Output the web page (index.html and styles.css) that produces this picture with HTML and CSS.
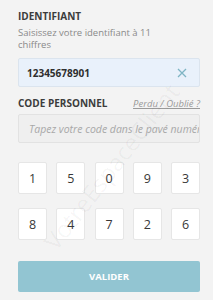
FILE: index.html
```html
<!DOCTYPE html>
<html lang="fr">
<head>
<meta charset="utf-8">
<link rel="stylesheet" href="styles.css">
</head>
<body>
<div class="page">
  <div class="label">IDENTIFIANT</div>
  <div class="hint">Saisissez votre identifiant à 11 chiffres</div>
  <div class="field field-id">
    <span class="value">12345678901</span>
    <svg class="clear" width="10" height="10" viewBox="0 0 10 10"><path d="M1 1 L9 9 M9 1 L1 9" stroke="#7fb5c4" stroke-width="1.3" fill="none"/></svg>
  </div>
  <div class="label-row">
    <span class="label">CODE PERSONNEL</span>
    <span class="link">Perdu / Oublié ?</span>
  </div>
  <div class="field field-code">
    <span class="placeholder">Tapez votre code dans le pavé numérique</span>
  </div>
  <div class="keypad">
    <div class="key">1</div><div class="key">5</div><div class="key">0</div><div class="key">9</div><div class="key">3</div>
    <div class="key">8</div><div class="key">4</div><div class="key">7</div><div class="key">2</div><div class="key">6</div>
  </div>
  <div class="button">VALIDER</div>
  <div class="watermark">VotreEspaceClient</div>
</div>
</body>
</html>
```
FILE: styles.css
```css
html, body {
  margin: 0;
  padding: 0;
  background: #f3f3f3;
}
.page {
  position: relative;
  width: 213px;
  height: 300px;
  overflow: hidden;
  box-sizing: border-box;
  padding: 10px 13px 0 18px;
  font-family: "Open Sans", sans-serif;
  color: #444;
}
.label {
  font-size: 10px;
  font-weight: 700;
  line-height: 13px;
  color: #3c3c3c;
}
.hint {
  margin-top: 4px;
  font-size: 9.5px;
  line-height: 11.5px;
  color: #8a8a8a;
  width: 140px;
}
.field {
  box-sizing: border-box;
  height: 29px;
  border-radius: 2px;
  display: flex;
  align-items: center;
  padding: 0 10px;
  overflow: hidden;
  white-space: nowrap;
}
.field-id {
  margin-top: 8px;
  background: #e9f1fb;
  border: 1px solid #dbe4ee;
  justify-content: space-between;
  padding-left: 8px;
}
.value {
  font-size: 10px;
  font-weight: 700;
  color: #2e2e2e;
}
.clear {
  display: block;
  margin-right: 2px;
}
.label-row {
  margin-top: 10px;
  display: flex;
  justify-content: space-between;
  align-items: baseline;
}
.link {
  font-size: 9.5px;
  font-style: italic;
  text-decoration: underline;
  color: #9a9a9a;
}
.field-code {
  margin-top: 4px;
  background: #efefef;
  border: 1px solid #e2e2e2;
}
.placeholder {
  font-size: 10.5px;
  font-style: italic;
  color: #a8a8a8;
}
.keypad {
  margin-top: 19px;
  display: grid;
  grid-template-columns: repeat(5, 29px);
  justify-content: space-between;
  row-gap: 14px;
}
.key {
  height: 32px;
  box-sizing: border-box;
  background: #fff;
  border: 1px solid #e6e6e6;
  border-radius: 2px;
  display: flex;
  align-items: center;
  justify-content: center;
  font-size: 12.5px;
  color: #383838;
}
.button {
  margin-top: 21px;
  height: 31px;
  border-radius: 2px;
  background: #92c5d2;
  color: #fff;
  font-size: 9.5px;
  font-weight: 700;
  display: flex;
  align-items: center;
  justify-content: center;
}
.watermark {
  position: absolute;
  left: 10px;
  top: 150px;
  transform: rotate(-52deg);
  font-size: 24px;
  color: rgba(0, 0, 0, 0.045);
  white-space: nowrap;
  pointer-events: none;
}
```
